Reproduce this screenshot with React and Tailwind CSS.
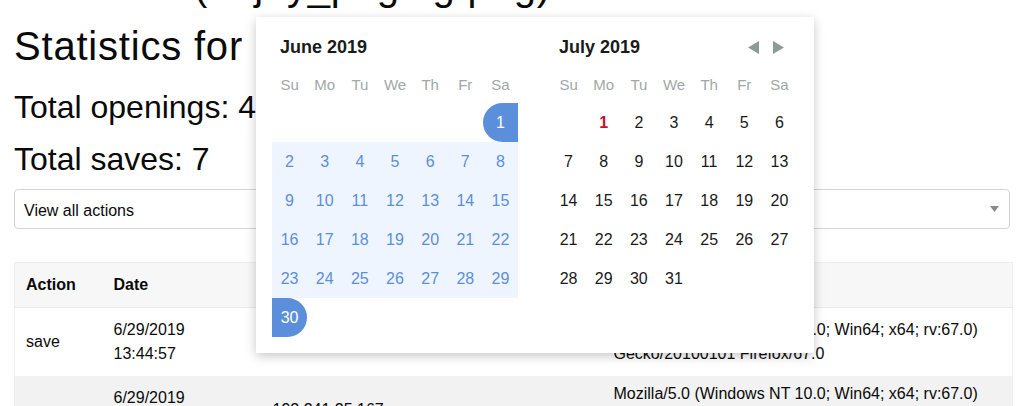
import React from "react";

const dayNames = ["Su", "Mo", "Tu", "We", "Th", "Fr", "Sa"];

function buildWeeks(offset, days) {
  const cells = [];
  for (let i = 0; i < offset; i++) cells.push(null);
  for (let d = 1; d <= days; d++) cells.push(d);
  while (cells.length % 7 !== 0) cells.push(null);
  const weeks = [];
  for (let i = 0; i < cells.length; i += 7) weeks.push(cells.slice(i, i + 7));
  return weeks;
}

function JuneCell({ d }) {
  if (d === null) return <div className="h-[39px]" />;
  if (d === 1)
    return (
      <div className="h-[39px] flex items-center justify-center rounded-l-full bg-[#5b8fdc] text-white">
        {d}
      </div>
    );
  if (d === 30)
    return (
      <div className="h-[39px] flex items-center justify-center rounded-r-full bg-[#5b8fdc] text-white">
        {d}
      </div>
    );
  return (
    <div className="h-[39px] flex items-center justify-center bg-[#eef5fe] text-[#5b8fdc]">
      {d}
    </div>
  );
}

function JulyCell({ d }) {
  if (d === null) return <div className="h-[39px]" />;
  if (d === 1)
    return <div className="h-[39px] flex items-center justify-center text-[#c8102e] font-bold">{d}</div>;
  return <div className="h-[39px] flex items-center justify-center text-[#1a1a1a]">{d}</div>;
}

function Month({ title, weeks, Cell, arrows }) {
  return (
    <div className="w-[246px] flex flex-col">
      <div className="h-[28px] flex items-center justify-between pl-2">
        <span className="text-[18px] font-bold text-[#1a1a1a] leading-[28px]">{title}</span>
        {arrows && (
          <div className="flex items-center gap-[14px] mr-[13px]">
            <svg width="11" height="13" viewBox="0 0 11 13">
              <polygon points="11,0 11,13 0,6.5" fill="#8c9a99" />
            </svg>
            <svg width="11" height="13" viewBox="0 0 11 13">
              <polygon points="0,0 0,13 11,6.5" fill="#8c9a99" />
            </svg>
          </div>
        )}
      </div>
      <div className="grid grid-cols-7 mt-[14px] text-[15px] leading-[20px] text-[#9fa7a7]">
        {dayNames.map((n) => (
          <div key={n} className="text-center">
            {n}
          </div>
        ))}
      </div>
      <div className="grid grid-cols-7 mt-[7px] text-[16px] pt-px">
        {weeks.flat().map((d, i) => (
          <Cell key={i} d={d} />
        ))}
      </div>
    </div>
  );
}

export default function App() {
  const june = buildWeeks(6, 30);
  const july = buildWeeks(1, 31);
  return (
    <div className="relative w-[1024px] h-[406px] overflow-hidden bg-white text-[#0a0a0a] font-['Liberation_Sans',Arial,sans-serif]">
      <div className="px-[14px] flex flex-col">
        <h1 className="text-[40px] leading-[48px] mt-[-38px] whitespace-nowrap tracking-[0.8px]">
          Statistics (enjoy_paging.png)
        </h1>
        <h1 className="text-[40px] leading-[48px] mt-[12px] tracking-[0.8px]">Statistics for</h1>
        <h2 className="text-[32px] leading-[38px] mt-[18px]">Total openings: 4</h2>
        <h2 className="text-[32px] leading-[38px] mt-[14px]">Total saves: 7</h2>
        <div className="mt-[11px] h-[40px] border border-[#d4d4d4] rounded-[4px] flex items-center justify-between pl-[9px] pr-[10px] text-[16px]">
          <span className="pt-[3px]">View all actions</span>
          <svg width="9" height="6" viewBox="0 0 9 6">
            <polygon points="0,0 9,0 4.5,6" fill="#8a8a8a" />
          </svg>
        </div>
        <table className="mt-[33px] w-[998px] border-collapse border border-[#eeeeee] text-[16px] leading-6 table-fixed">
          <colgroup>
            <col className="w-[88px]" />
            <col className="w-[159px]" />
            <col className="w-[341px]" />
            <col className="w-[410px]" />
          </colgroup>
          <thead>
            <tr className="bg-[#f7f7f7] border-b border-[#e9e9e9]">
              <th className="text-left font-bold px-[11px] py-[10px]">Action</th>
              <th className="text-left font-bold px-[11px] py-[10px]">Date</th>
              <th className="text-left font-bold px-[11px] py-[10px]">IP</th>
              <th className="text-left font-bold px-[11px] py-[10px]">User agent</th>
            </tr>
          </thead>
          <tbody>
            <tr className="bg-white">
              <td className="px-[11px] py-[10px] align-middle">save</td>
              <td className="px-[11px] py-[10px] align-middle">6/29/2019 13:44:57</td>
              <td className="px-[11px] py-[10px] align-middle">192.241.25.167</td>
              <td className="px-[11px] py-[10px] align-middle">
                Mozilla/5.0 (Windows NT 10.0; Win64; x64; rv:67.0) Gecko/20100101 Firefox/67.0
              </td>
            </tr>
            <tr className="bg-[#f2f2f2]">
              <td className="px-[11px] py-[10px] align-middle">open</td>
              <td className="px-[11px] py-[10px] align-middle">6/29/2019 13:44:52</td>
              <td className="px-[11px] py-[10px] align-middle">192.241.25.167</td>
              <td className="px-[11px] pt-[6px] pb-[14px] align-middle">
                Mozilla/5.0 (Windows NT 10.0; Win64; x64; rv:67.0) Gecko/20100101 Firefox/67.0
              </td>
            </tr>
          </tbody>
        </table>
      </div>

      <div className="absolute left-[256px] top-[17px] w-[558px] bg-white shadow-[0_3px_10px_rgba(0,0,0,0.22)] pt-4 pl-4 pr-[17px] pb-[16px] flex gap-[33px]">
        <Month title="June 2019" weeks={june} Cell={JuneCell} />
        <Month title="July 2019" weeks={july} Cell={JulyCell} arrows />
      </div>
    </div>
  );
}
